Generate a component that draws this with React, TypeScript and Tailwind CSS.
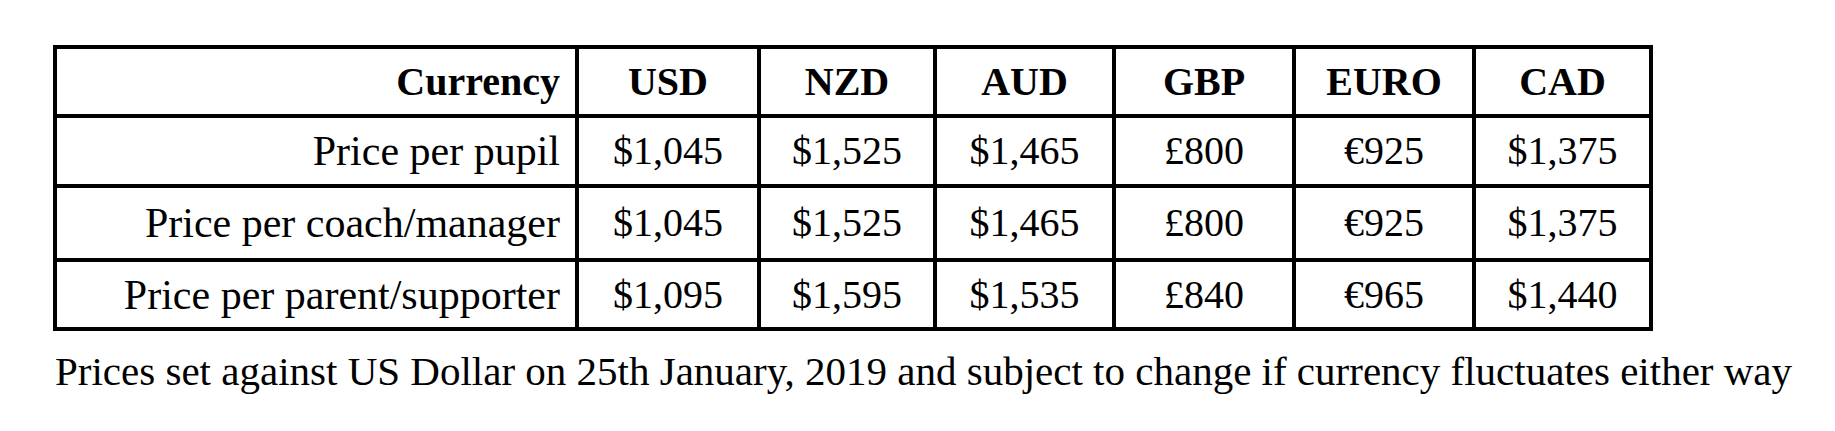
const columns = ['USD', 'NZD', 'AUD', 'GBP', 'EURO', 'CAD'];

const rows = [
  { label: 'Price per pupil', prices: ['$1,045', '$1,525', '$1,465', '£800', '€925', '$1,375'], height: 'h-[70px]' },
  { label: 'Price per coach/manager', prices: ['$1,045', '$1,525', '$1,465', '£800', '€925', '$1,375'], height: 'h-[74px]' },
  { label: 'Price per parent/supporter', prices: ['$1,095', '$1,595', '$1,535', '£840', '€965', '$1,440'], height: 'h-[69px]' },
];

const colWidths = ['w-[522px]', 'w-[182px]', 'w-[176px]', 'w-[179px]', 'w-[180px]', 'w-[180px]', 'w-[177px]'];

export default function App() {
  return (
    <div className="w-[1835px] h-[431px] bg-white text-black font-['Liberation_Serif',serif] pt-[45px] pl-[53px]">
      {/* Price table */}
      <table className="table-fixed border-collapse border-4 border-black w-[1600px] text-[40px] leading-none">
        <colgroup>
          {colWidths.map((w, i) => (
            <col key={i} className={w} />
          ))}
        </colgroup>
        <thead>
          <tr className="h-[69px]">
            <th className="border-4 border-black text-right pr-[15px] font-bold">Currency</th>
            {columns.map((c) => (
              <th key={c} className="border-4 border-black text-center font-bold">
                {c}
              </th>
            ))}
          </tr>
        </thead>
        <tbody>
          {rows.map((row) => (
            <tr key={row.label} className={row.height}>
              <td className="border-4 border-black text-right pr-[15px] text-[42px]">{row.label}</td>
              {row.prices.map((p, i) => (
                <td key={i} className="border-4 border-black text-center">
                  {p}
                </td>
              ))}
            </tr>
          ))}
        </tbody>
      </table>

      {/* Footnote */}
      <p className="mt-[20px] ml-[2px] text-[41px] leading-none whitespace-nowrap">
        Prices set against US Dollar on 25th January, 2019 and subject to change if currency fluctuates either way
      </p>
    </div>
  );
}
